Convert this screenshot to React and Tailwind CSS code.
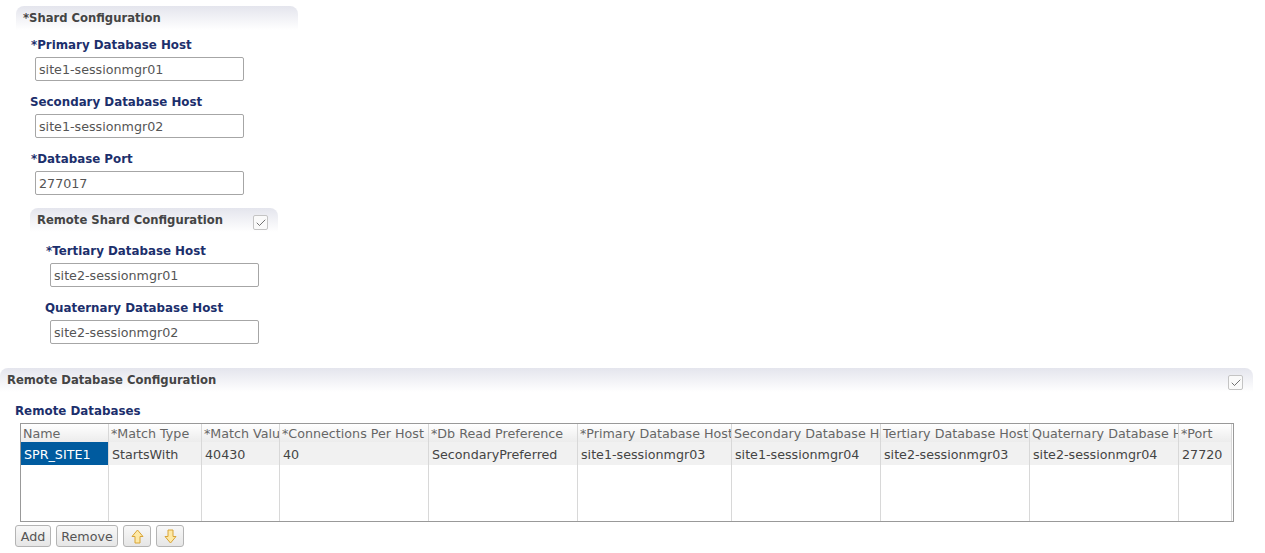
import { Check } from "lucide-react";

const font = "font-['DejaVu_Sans',Verdana,sans-serif]";

const columns = [
  { title: "Name", value: "SPR_SITE1", width: "w-[88px]" },
  { title: "*Match Type", value: "StartsWith", width: "w-[93px]" },
  { title: "*Match Value", value: "40430", width: "w-[78px]" },
  { title: "*Connections Per Host", value: "40", width: "w-[149px]" },
  { title: "*Db Read Preference", value: "SecondaryPreferred", width: "w-[149px]" },
  { title: "*Primary Database Host", value: "site1-sessionmgr03", width: "w-[154px]" },
  { title: "Secondary Database Host", value: "site1-sessionmgr04", width: "w-[149px]" },
  { title: "Tertiary Database Host", value: "site2-sessionmgr03", width: "w-[149px]" },
  { title: "Quaternary Database Host", value: "site2-sessionmgr04", width: "w-[149px]" },
  { title: "*Port", value: "27720", width: "w-[53px]" },
];

function SectionHeader({ title, width, checkbox }) {
  return (
    <div className={`flex h-[24px] items-start justify-between rounded-t-[8px] bg-gradient-to-b from-[#e4e5ed] to-white ${width}`}>
      <span className="pl-[7px] pt-[4px] text-[11.6px] leading-[16px] font-bold text-[#444444]">{title}</span>
      {checkbox && (
        <span className="mt-[7px] mr-[10px] flex h-[15px] w-[15px] items-center justify-center rounded-[2px] border border-[#c4c4c4] bg-[#fafafa]">
          <Check size={12} strokeWidth={1.5} className="text-[#444444]" />
        </span>
      )}
    </div>
  );
}

function Field({ label, value, labelClass }) {
  return (
    <div className="h-[57px]">
      <div className={`h-[20px] text-[11.85px] leading-[16px] font-bold text-[#1c2f6c] ${labelClass}`}>{label}</div>
      <input
        readOnly
        value={value}
        className="ml-[5px] block h-[24px] w-[209px] rounded-[2px] border border-[#a6a6a6] bg-white px-[3px] text-[12.7px] text-[#555555] outline-none"
      />
    </div>
  );
}

function ArrowButton({ down }) {
  return (
    <button className="flex h-[22px] w-[28px] items-center justify-center rounded-[3px] border border-[#b4b4b4] bg-gradient-to-b from-[#f8f8f8] to-[#e6e6e6]">
      <svg width="13" height="15" viewBox="0 0 13 15" className={down ? "rotate-180" : ""}>
        <path d="M6.5 1 L12 7.5 H9 V14 H4 V7.5 H1 Z" fill="#fee9a6" stroke="#d8a437" strokeWidth="1" strokeLinejoin="round" />
      </svg>
    </button>
  );
}

function TextButton({ label, width }) {
  return (
    <button className={`h-[22px] rounded-[3px] border border-[#b4b4b4] bg-gradient-to-b from-[#f8f8f8] to-[#e6e6e6] pt-[1px] text-[12.7px] text-[#555555] ${width}`}>
      {label}
    </button>
  );
}

export default function App() {
  return (
    <div className={`h-[553px] w-[1265px] overflow-hidden bg-white ${font}`}>
      <div className="pt-[6px] pl-[16px]">
        <SectionHeader title="*Shard Configuration" width="w-[282px]" />
        <div className="pt-[7px] pl-[14px]">
          <Field label="*Primary Database Host" value="site1-sessionmgr01" labelClass="pl-[1px]" />
          <Field label="Secondary Database Host" value="site1-sessionmgr02" />
          <Field label="*Database Port" value="277017" labelClass="pl-[1px]" />
        </div>
        <div className="pl-[14px]">
          <SectionHeader title="Remote Shard Configuration" width="w-[248px]" checkbox />
          <div className="pt-[11px] pl-[15px]">
            <Field label="*Tertiary Database Host" value="site2-sessionmgr01" labelClass="pl-[1px]" />
            <Field label="Quaternary Database Host" value="site2-sessionmgr02" />
          </div>
        </div>
      </div>

      <div className="pt-[11px]">
        <SectionHeader title="Remote Database Configuration" width="w-[1253px]" checkbox />
      </div>
      <div className="pt-[11px] pl-[15px] text-[11.85px] leading-[16px] font-bold text-[#1c2f6c]">Remote Databases</div>

      <div className="mt-[4px] ml-[20px] flex h-[99px] w-[1214px] border border-[#999999] bg-white text-[12.7px] text-[#555555]">
        {columns.map((col) => (
          <div key={col.title} className={`flex shrink-0 flex-col border-r border-[#d8d8d8] ${col.width}`}>
            <div className="h-[18px] overflow-hidden bg-gradient-to-b from-white to-[#ececec] pl-[2px] leading-[20px] whitespace-nowrap text-[#666666]">
              {col.title}
            </div>
            <div
              className={
                col.title === "Name"
                  ? "h-[23px] bg-[#005b9f] pl-[3px] leading-[25px] whitespace-nowrap text-white"
                  : "h-[23px] bg-[#f1f1f1] pl-[3px] leading-[25px] whitespace-nowrap text-[#444444]"
              }
            >
              {col.value}
            </div>
          </div>
        ))}
      </div>

      <div className="mt-[3px] ml-[15px] flex gap-[5px]">
        <TextButton label="Add" width="w-[36px]" />
        <TextButton label="Remove" width="w-[62px]" />
        <ArrowButton />
        <ArrowButton down />
      </div>
    </div>
  );
}
